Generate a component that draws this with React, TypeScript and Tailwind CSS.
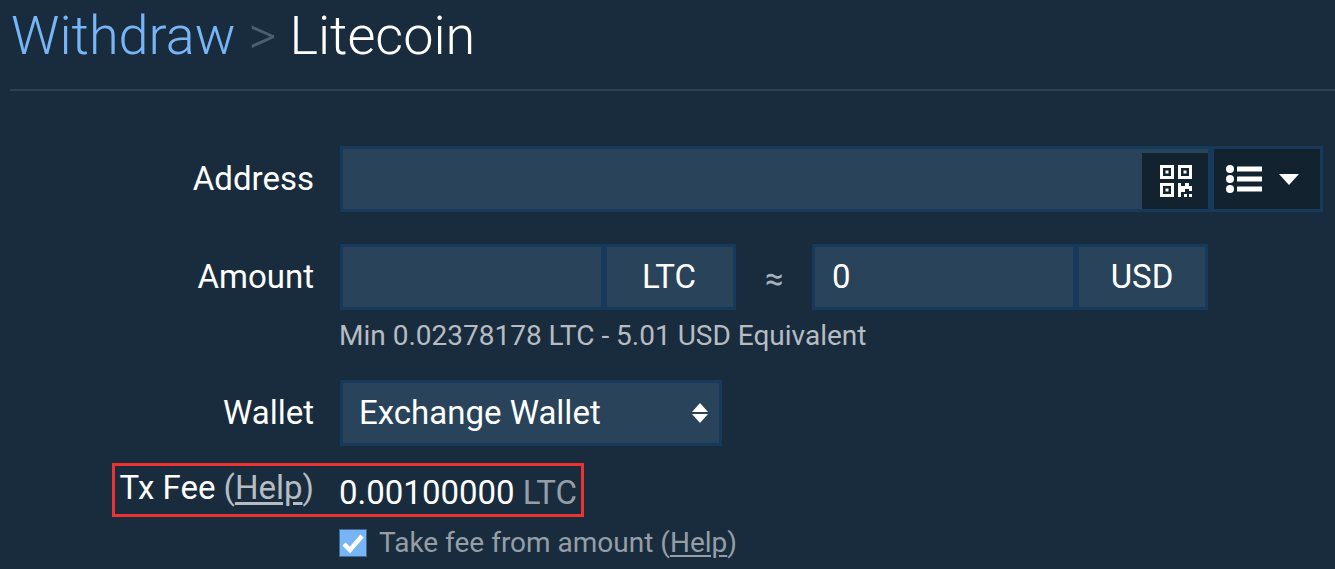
const labelClass = "w-[314px] shrink-0 text-right text-[33px] leading-[40px] text-white";
const boxClass = "h-[66px] border-[3px] border-[#173a5c] bg-[#28435a] text-[33px] text-white";

function QrIcon() {
  return (
    <svg width="32" height="32" viewBox="0 0 32 32" fill="#fff" aria-hidden="true">
      <path fillRule="evenodd" d="M0 0h14v14H0zM3 3v8h8V3zM5.500 5.500h3v3h-3zM18 0h14v14H18zM21 3v8h8V3zM23.500 5.500h3v3h-3zM0 18h14v14H0zM3 21v8h8v-8zM5.500 23.500h3v3h-3z" />
      <path d="M18 18h3v14h-3zM21 21h4v-3h4v3h3v5h-3v-2h-4v3h-4zM24 29h3v3h-3zM29 29h3v3h-3z" />
    </svg>
  );
}

function ListIcon() {
  return (
    <svg width="36" height="28" viewBox="0 0 36 28" fill="#fff" aria-hidden="true">
      <circle cx="4" cy="4" r="4" />
      <circle cx="4" cy="14" r="4" />
      <circle cx="4" cy="24" r="4" />
      <rect x="11" y="1.500" width="25" height="5" rx="0.500" />
      <rect x="11" y="11.500" width="25" height="5" rx="0.500" />
      <rect x="11" y="21.500" width="25" height="5" rx="0.500" />
    </svg>
  );
}

export default function App() {
  return (
    <div className="h-[569px] w-[1335px] overflow-hidden bg-[#192c3e] pl-[10px] font-['Roboto',sans-serif]">
      <h1 className="flex h-[89px] items-start pl-px pt-[5px] text-[54px] leading-[62px] font-light">
        <span className="text-[#77b5f7]">Withdraw</span>
        <span className="mx-[13px] text-[#4b5f70]">&gt;</span>
        <span className="text-white">Litecoin</span>
      </h1>
      <div className="h-[2px] bg-[#2f4152]" />

      <div className="mt-[55px] -ml-[10px] flex items-center">
        <label className={labelClass}>Address</label>
        <div className="ml-[26px] flex h-[66px] w-[871px] justify-end border-[3px] border-[#173a5c] bg-[#28435a]">
          <button className="mt-[4px] flex w-[66px] items-center justify-center bg-[#12232f] pl-px">
            <QrIcon />
          </button>
        </div>
        <button className="flex h-[66px] w-[112px] items-center gap-[17px] border-[3px] border-[#173a5c] bg-[#12232f] pl-[12px]">
          <ListIcon />
          <span className="mt-[1px] h-0 w-0 border-x-[10px] border-t-[11px] border-x-transparent border-t-white" />
        </button>
      </div>

      <div className="mt-[32px] -ml-[10px] flex items-center">
        <label className={labelClass}>Amount</label>
        <div className="ml-[26px] flex items-center">
          <div className={`${boxClass} w-[264px]`} />
          <div className={`${boxClass} flex w-[132px] items-center justify-center pr-[2px]`}>LTC</div>
          <span className="w-[76px] pt-[3px] text-center text-[33px] text-[#a9b2ba]">≈</span>
          <div className={`${boxClass} flex w-[264px] items-center pl-[17px]`}>0</div>
          <div className={`${boxClass} flex w-[132px] items-center justify-center`}>USD</div>
        </div>
      </div>
      <p className="mt-[10px] ml-[329px] text-[28px] leading-[32px] text-[#b6bcc2]">
        Min 0.02378178 LTC - 5.01 USD Equivalent
      </p>

      <div className="mt-[28px] -ml-[10px] flex items-center">
        <label className={labelClass}>Wallet</label>
        <div className={`${boxClass} ml-[26px] flex w-[382px] items-center justify-between pr-[11px] pl-[16px]`}>
          <span>Exchange Wallet</span>
          <span className="flex flex-col gap-[2px]">
            <span className="h-0 w-0 border-x-[8px] border-b-[9px] border-x-transparent border-b-white" />
            <span className="h-0 w-0 border-x-[8px] border-t-[9px] border-x-transparent border-t-white" />
          </span>
        </div>
      </div>

      <div className="relative mt-[22px] -ml-[10px] flex items-start">
        <div className="pointer-events-none absolute top-[-5px] left-[112px] h-[54px] w-[472px] border-[3px] border-[#ee3232]" />
        <label className={labelClass}>
          Tx Fee <span className="text-[#b6bcc2]">(<span className="underline underline-offset-[3px]">Help</span>)</span>
        </label>
        <div className="mt-[5px] ml-[25px] text-[33px] leading-[40px] text-white">
          0.00100000 <span className="text-[#959ea6]">LTC</span>
        </div>
      </div>

      <div className="mt-[10px] ml-[329px] flex items-center gap-[12px] text-[28px] leading-[40px] text-[#959ea6]">
        <span className="flex h-[28px] w-[28px] items-center justify-center border border-[#3e6a94] bg-[#77b5f7]">
          <svg width="22" height="20" viewBox="0 0 22 20" fill="none" stroke="#fff" strokeWidth="4.500" aria-hidden="true">
            <path d="M2 11l6 6L20 3" />
          </svg>
        </span>
        <span>Take fee from amount (<span className="underline underline-offset-[3px]">Help</span>)</span>
      </div>
    </div>
  );
}
